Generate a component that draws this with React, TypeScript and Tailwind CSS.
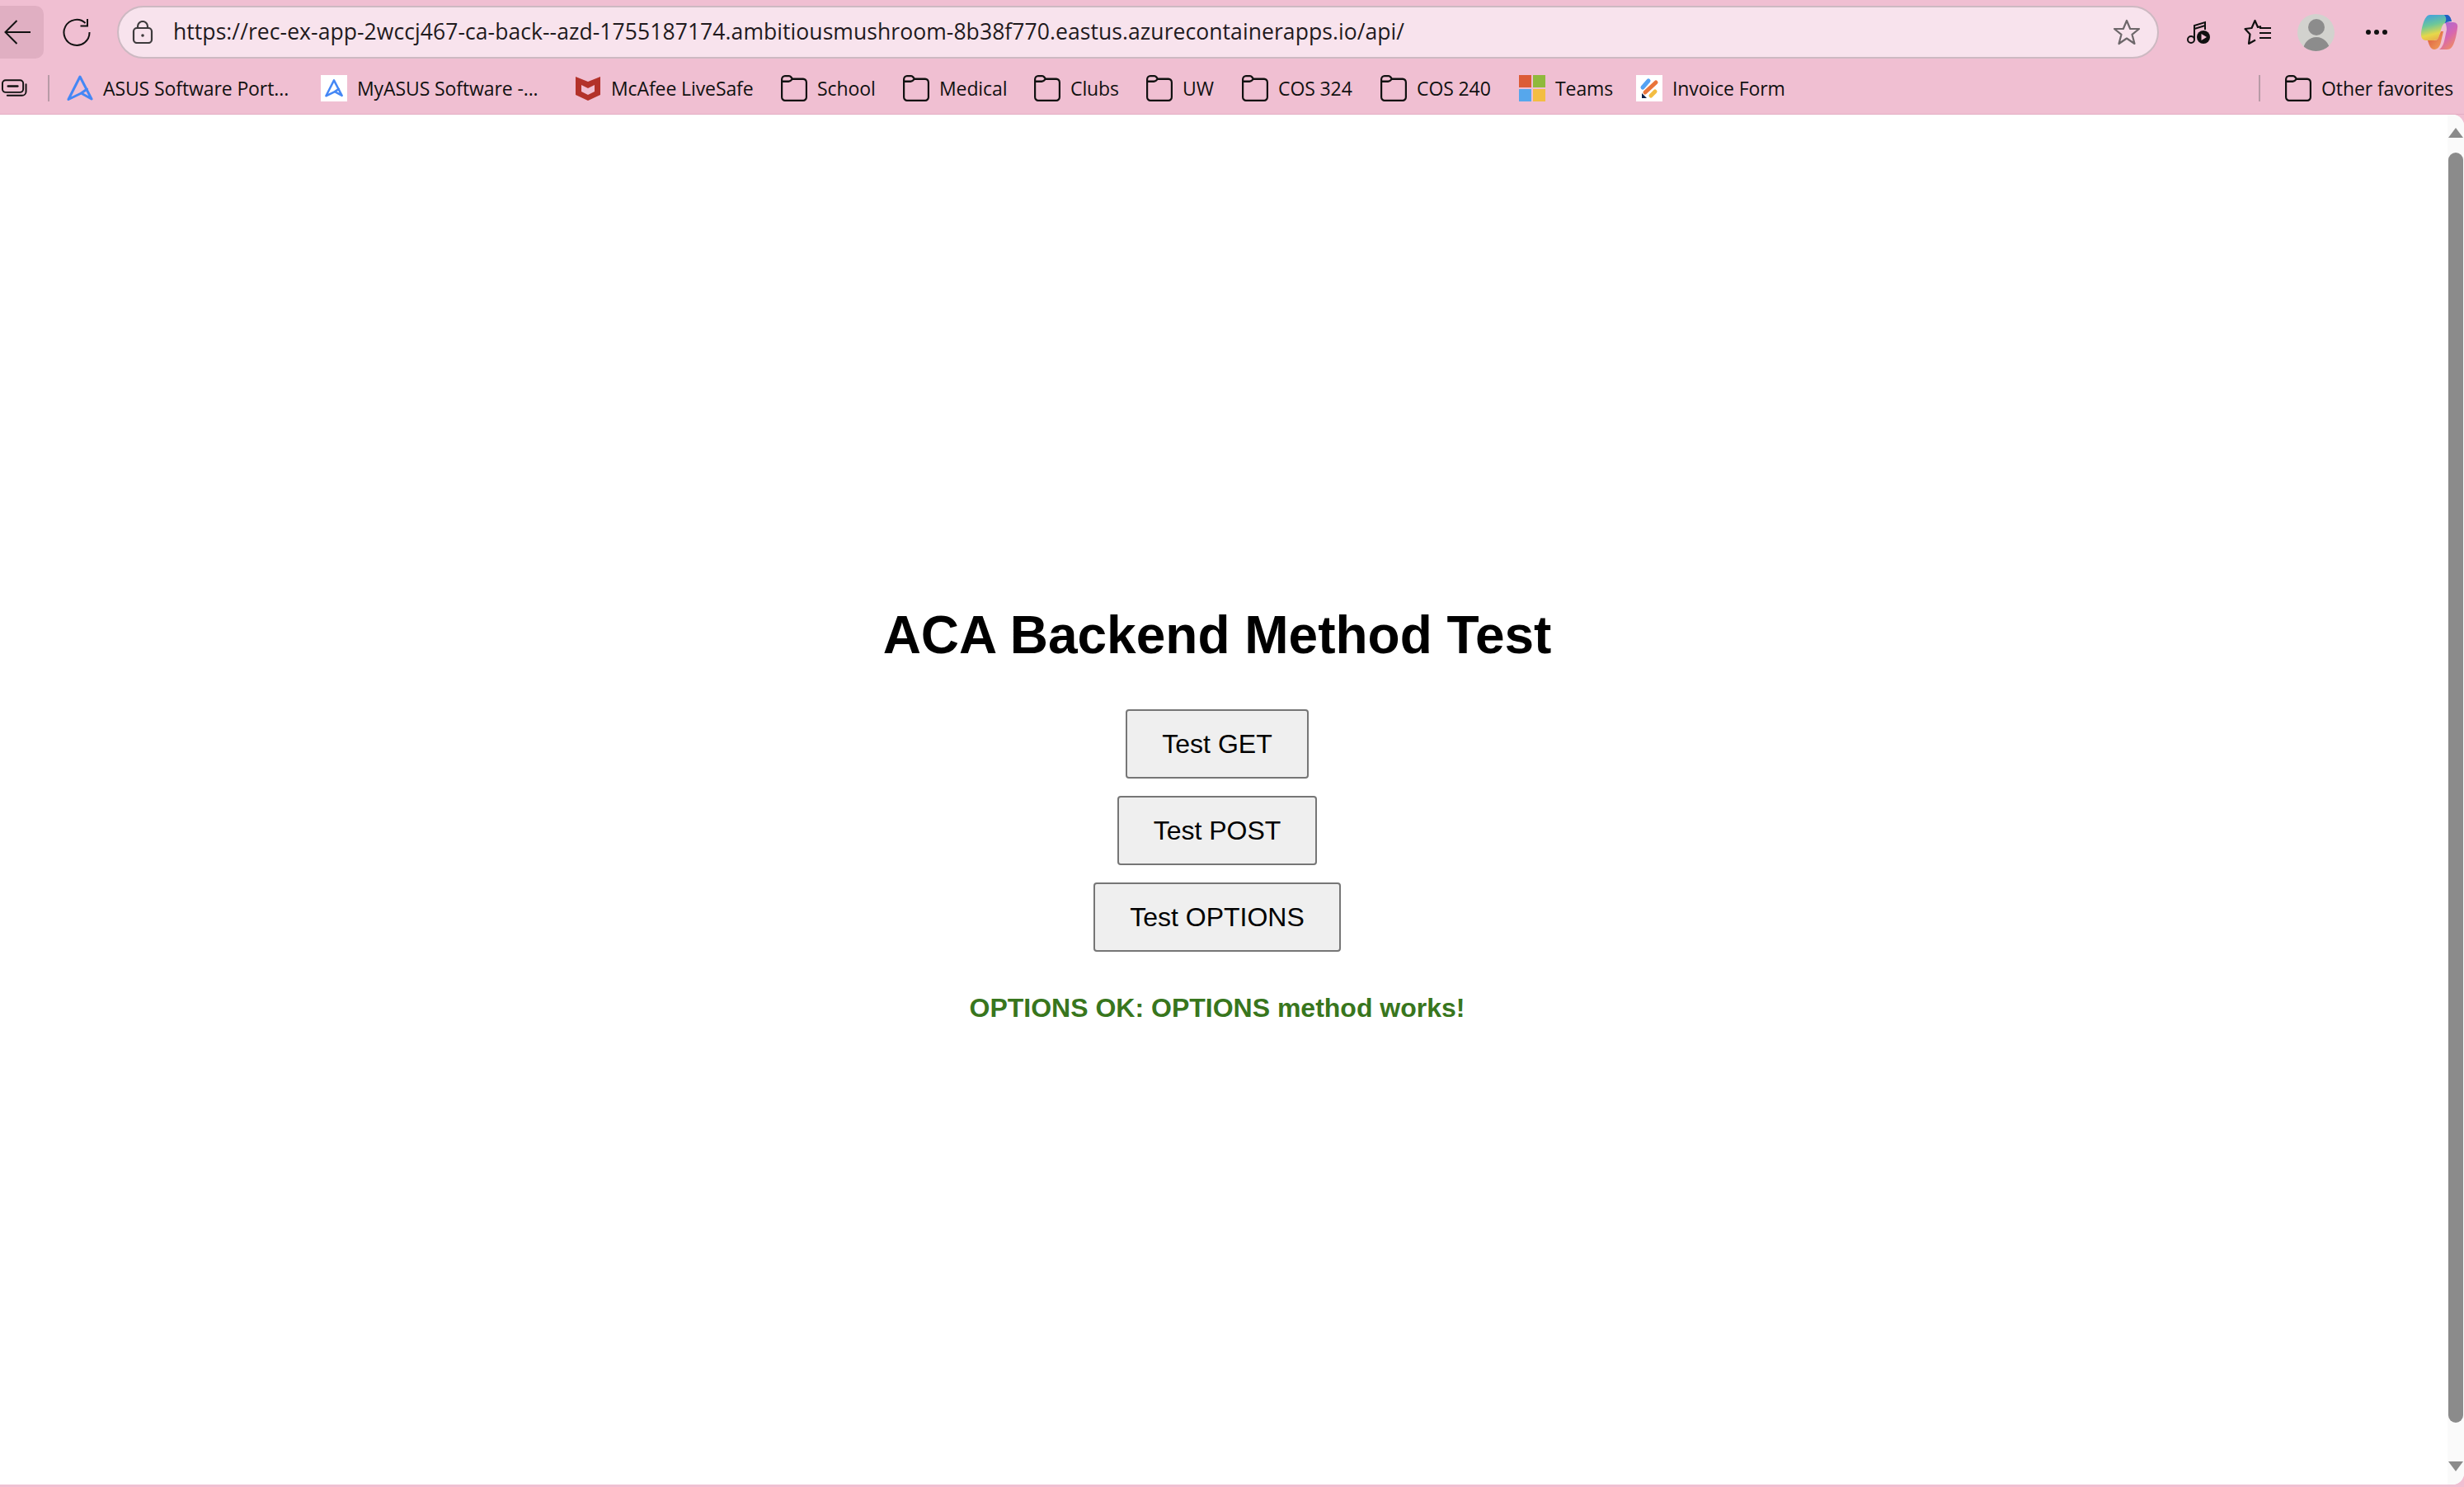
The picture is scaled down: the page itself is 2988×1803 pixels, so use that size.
const FOLDER_PATH = 'M3 7.5A3.5 3.5 0 0 1 6.5 4H11c1 0 1.6.5 2.2 1.2L14.6 7H26.5A3.5 3.5 0 0 1 30 10.5V25.5A3.5 3.5 0 0 1 26.5 29H6.5A3.5 3.5 0 0 1 3 25.5ZM3 9.5H10.5C12 9.5 13 8.8 14.6 7';

function FolderIcon()
{
	return (
		<svg width="32" height="32" viewBox="2 3 29 27" preserveAspectRatio="none" fill="none" stroke="#111" strokeWidth="2" className="shrink-0">
			<path d={FOLDER_PATH} />
		</svg>
	);
}

function AsusIcon({ small }: { small?: boolean })
{
	return (
		<svg width={small ? 22 : 32} height={small ? 22 : 32} viewBox="0 0 32 32" fill="none" stroke="#4487f5" strokeWidth={small ? 3.6 : 3} strokeLinejoin="round" strokeLinecap="round">
			<path d="M16 2 30 29 17.5 22 2 29.5ZM17.5 22 24.5 17" />
		</svg>
	);
}

function McAfeeIcon()
{
	return (
		<svg width="32" height="32" viewBox="0 0 32 32">
			<path d="M1 2 16 8 31 2V24L16 31 1 24ZM8 12V20L16 24 24 20V12L16 16Z" fill="#b3322a" fillRule="evenodd" />
		</svg>
	);
}

function TeamsIcon()
{
	return (
		<div className="grid grid-cols-2 gap-[2px] w-[32px] h-[32px] shrink-0">
			<div className="bg-[#dc5c36]" />
			<div className="bg-[#90b93c]" />
			<div className="bg-[#56a7ec]" />
			<div className="bg-[#f3bd42]" />
		</div>
	);
}

function InvoiceIcon()
{
	return (
		<div className="w-[32px] h-[32px] bg-white shrink-0">
			<svg width="32" height="32" viewBox="0 0 32 32" fill="none" strokeWidth="5" strokeLinecap="round">
				<path d="M8 15 15 7" stroke="#55a2f2" />
				<path d="M11 21 24 9" stroke="#e9743a" />
				<path d="M18 25 23 20" stroke="#f3bd42" />
				<path d="M7 22V28H13Z" fill="#0b1e46" stroke="none" />
			</svg>
		</div>
	);
}

function StackIcon()
{
	return (
		<svg width="32" height="22" viewBox="0 0 32 22" fill="none" stroke="#111" strokeWidth="2" strokeLinecap="round">
			<rect x="1" y="1" width="26" height="15" rx="4" />
			<path d="M8 8.5H20" strokeWidth="2.5" />
			<path d="M30.5 6V15A5 5 0 0 1 25.5 20H7" />
		</svg>
	);
}

function CopilotIcon()
{
	return (
		<svg width="45" height="42" viewBox="0 0 45 42">
			<defs>
				<linearGradient id="cop-a" x1="0" y1="0" x2="0.3" y2="1">
					<stop offset="0" stopColor="#3c9be8" />
					<stop offset="0.45" stopColor="#6cc79a" />
					<stop offset="0.8" stopColor="#e6d84a" />
					<stop offset="1" stopColor="#e9b84a" />
				</linearGradient>
				<linearGradient id="cop-b" x1="0" y1="0" x2="0.6" y2="1">
					<stop offset="0" stopColor="#9c6be0" />
					<stop offset="0.6" stopColor="#d766b0" />
					<stop offset="1" stopColor="#ee8a66" />
				</linearGradient>
				<linearGradient id="cop-c" x1="0" y1="0" x2="1" y2="1">
					<stop offset="0" stopColor="#d9543f" />
					<stop offset="1" stopColor="#f3a45a" />
				</linearGradient>
			</defs>
			<path d="M11 0H31C34 0 35 2 36 5L37 8C30 8 27 10 25 15L21 28C20 31 16 31 13 31H6C2 31 0 28 0 24C0 18 3 6 6 3 7 1 9 0 11 0Z" fill="url(#cop-a)" />
			<path d="M29 9H39C43 9 45 12 44 16 43 24 41 33 38 38 36 41 34 42 31 42H22C25 40 27 36 28 32L31 18C31 14 30 11 29 9Z" fill="url(#cop-b)" />
			<path d="M8 31H17C20 31 21 28 22 25L24 20 27 20 24 33C23 38 20 42 16 42 12 42 10 38 8 31Z" fill="url(#cop-c)" />
			<path d="M28 0H31C34 0 36 3 37 8 32 8 30 9 28 11 31 7 31 3 28 0Z" fill="#1f5fc4" />
		</svg>
	);
}

const bookmarks = [
	{ label: 'ASUS Software Port...', icon: <AsusIcon />, width: 'w-[224px]', gap: 'ml-[21px]' },
	{ label: 'MyASUS Software -...', icon: <div className="w-[32px] h-[32px] bg-white flex items-center justify-center shrink-0"><AsusIcon small /></div>, width: 'w-[224px]', gap: 'ml-[40px]' },
	{ label: 'McAfee LiveSafe', icon: <McAfeeIcon />, width: 'w-[173px]', gap: 'ml-[40px]' },
	{ label: 'School', icon: <FolderIcon />, width: 'w-[71px]', gap: 'ml-[33px]' },
	{ label: 'Medical', icon: <FolderIcon />, width: 'w-[82px]', gap: 'ml-[33px]' },
	{ label: 'Clubs', icon: <FolderIcon />, width: 'w-[59px]', gap: 'ml-[33px]' },
	{ label: 'UW', icon: <FolderIcon />, width: 'w-[39px]', gap: 'ml-[33px]' },
	{ label: 'COS 324', icon: <FolderIcon />, width: 'w-[90px]', gap: 'ml-[33px]' },
	{ label: 'COS 240', icon: <FolderIcon />, width: 'w-[90px]', gap: 'ml-[34px]' },
	{ label: 'Teams', icon: <TeamsIcon />, width: 'w-[65px]', gap: 'ml-[34px]' },
	{ label: 'Invoice Form', icon: <InvoiceIcon />, width: 'w-[136px]', gap: 'ml-[33px]' },
];

export default function App()
{
	return (
		<div className="w-full h-screen flex flex-col overflow-hidden bg-[#f0bfd2] font-['Open_Sans',sans-serif] text-[#111]">
			{/* toolbar */}
			<div className="h-[78px] shrink-0 flex items-start pt-[7px]">
				<div className="w-[53px] h-[64px] bg-[#e0afc2] rounded-r-[10px] flex items-center justify-end pr-[16px]">
					<svg width="32" height="30" viewBox="0 0 32 30" fill="none" stroke="#111" strokeWidth="2">
						<path d="M32 15H2M15.5 1 1.5 15 15.5 29" />
					</svg>
				</div>
				<div className="w-[89px] h-[64px] flex items-center justify-start pl-[23px]">
					<svg width="34" height="34" viewBox="0 0 34 34" fill="none" stroke="#111" strokeWidth="2">
						<path d="M27.5 6A15.5 15.5 0 1 0 32.5 17M30 1V9.5H21.5" />
					</svg>
				</div>
				<div className="w-[2476px] h-[64px] rounded-full bg-[#f8e3ed] border-2 border-[#cdb9c2] flex items-center pl-[16px] pr-[20px]">
					<svg width="26" height="28" viewBox="0 0 26 28" fill="none" stroke="#3d3a3c" strokeWidth="2.2" className="shrink-0">
						<rect x="2" y="9" width="22" height="18" rx="4" />
						<path d="M7 9V7A6 6 0 0 1 19 7V9" />
						<circle cx="13" cy="18" r="1.8" fill="#3d3a3c" stroke="none" />
					</svg>
					<span className="ml-[24px] text-[26.5px] tracking-[0.07px] whitespace-nowrap text-[#1f1a1d]">https://rec-ex-app-2wccj467-ca-back--azd-1755187174.ambitiousmushroom-8b38f770.eastus.azurecontainerapps.io/api/</span>
					<svg width="34" height="32" viewBox="0 0 34 32" fill="none" stroke="#6d676a" strokeWidth="2.2" strokeLinejoin="round" className="ml-auto">
						<path d="M17 2 21.2 12H32L23.5 18.8 26.5 30 17 23.5 7.5 30 10.5 18.8 2 12H12.8Z" />
					</svg>
				</div>
				<div className="flex-1 h-[64px] flex items-center">
					<div className="w-[63px] flex justify-end shrink-0">
						<svg width="30" height="30" viewBox="0 0 30 30" fill="none" stroke="#111" strokeWidth="2">
							<circle cx="6" cy="24" r="4" />
							<path d="M10 24V7L23 3V12M10 11 23 7" />
							<circle cx="21" cy="21" r="8" fill="#111" stroke="none" />
							<path d="M18.5 17V25L25 21Z" fill="#f0bfd2" stroke="none" />
						</svg>
					</div>
					<div className="ml-[40px] shrink-0 flex">
						<svg width="34" height="32" viewBox="0 0 34 32" fill="none" stroke="#111" strokeWidth="2.2" strokeLinejoin="round">
							<path d="M21 9 17 10 13.5 2 9.5 11 1.5 12 7.5 18.5 6 30 14 25.5" />
							<path d="M19 11H33M19 17H33M19 23H33" />
						</svg>
					</div>
					<div className="ml-[31px] w-[45px] h-[45px] rounded-full bg-[#d2d2ce] overflow-hidden flex flex-col items-center shrink-0">
						<div className="mt-[6px] w-[20px] h-[20px] rounded-full bg-[#8c8c8c] shrink-0" />
						<div className="mt-[2px] w-[32px] h-[24px] rounded-t-full bg-[#8c8c8c] shrink-0" />
					</div>
					<div className="ml-[38px] flex gap-[4px] shrink-0">
						<div className="w-[6px] h-[6px] rounded-full bg-[#111]" />
						<div className="w-[6px] h-[6px] rounded-full bg-[#111]" />
						<div className="w-[6px] h-[6px] rounded-full bg-[#111]" />
					</div>
					<div className="ml-[41px] shrink-0">
						<CopilotIcon />
					</div>
				</div>
			</div>

			{/* favorites bar */}
			<div className="h-[61px] shrink-0 flex items-start pt-[13px] text-[23px] leading-[32px] border-b border-[#e3adc3]">
				<div className="w-[33px] pl-[2px] h-[32px] flex items-center">
					<StackIcon />
				</div>
				<div className="ml-[25px] w-[2px] h-[32px] bg-[#b89aa6]" />
				{bookmarks.map(b => (
					<div key={b.label} className={`flex items-center gap-[12px] shrink-0 ${b.gap}`}>
						{b.icon}
						<span className={`whitespace-nowrap tracking-[-0.1px] ${b.width}`}>{b.label}</span>
					</div>
				))}
				<div className="ml-[575px] w-[2px] h-[32px] bg-[#b89aa6]" />
				<div className="ml-[30px] flex items-center gap-[12px] shrink-0">
					<FolderIcon />
					<span className="whitespace-nowrap tracking-[-0.1px]">Other favorites</span>
				</div>
			</div>

			{/* page */}
			<div className="flex-1 flex min-h-0 bg-white rounded-tr-[14px] rounded-br-[14px] mb-[3px] overflow-hidden font-['Liberation_Sans',sans-serif] text-black">
				<div className="flex-1 flex flex-col items-center pt-[589px] pr-[16px]">
					<h1 className="text-[64px] leading-[84px] font-bold">ACA Backend Method Test</h1>
					<div className="mt-[48px] flex flex-col items-center gap-[21px]">
						<button className="h-[84px] px-[42px] text-[32px] bg-[#efefef] border-2 border-[#767676] rounded-[4px]">Test GET</button>
						<button className="h-[84px] px-[42px] text-[32px] bg-[#efefef] border-2 border-[#767676] rounded-[4px]">Test POST</button>
						<button className="h-[84px] px-[42px] text-[32px] bg-[#efefef] border-2 border-[#767676] rounded-[4px]">Test OPTIONS</button>
					</div>
					<p className="mt-[50px] text-[32px] leading-[37px] font-bold text-[#38761d]">OPTIONS OK: OPTIONS method works!</p>
				</div>
				<div className="w-[20px] shrink-0 bg-[#fafafa] flex flex-col items-center pt-[16px] pb-[16px]">
					<div className="w-0 h-0 border-l-[9px] border-r-[9px] border-b-[12px] border-l-transparent border-r-transparent border-b-[#8b8b8b]" />
					<div className="mt-[18px] w-[18px] flex-1 rounded-full bg-[#8b8b8b]" />
					<div className="mt-[47px] w-0 h-0 border-l-[9px] border-r-[9px] border-t-[12px] border-l-transparent border-r-transparent border-t-[#8b8b8b]" />
				</div>
			</div>
		</div>
	);
}
